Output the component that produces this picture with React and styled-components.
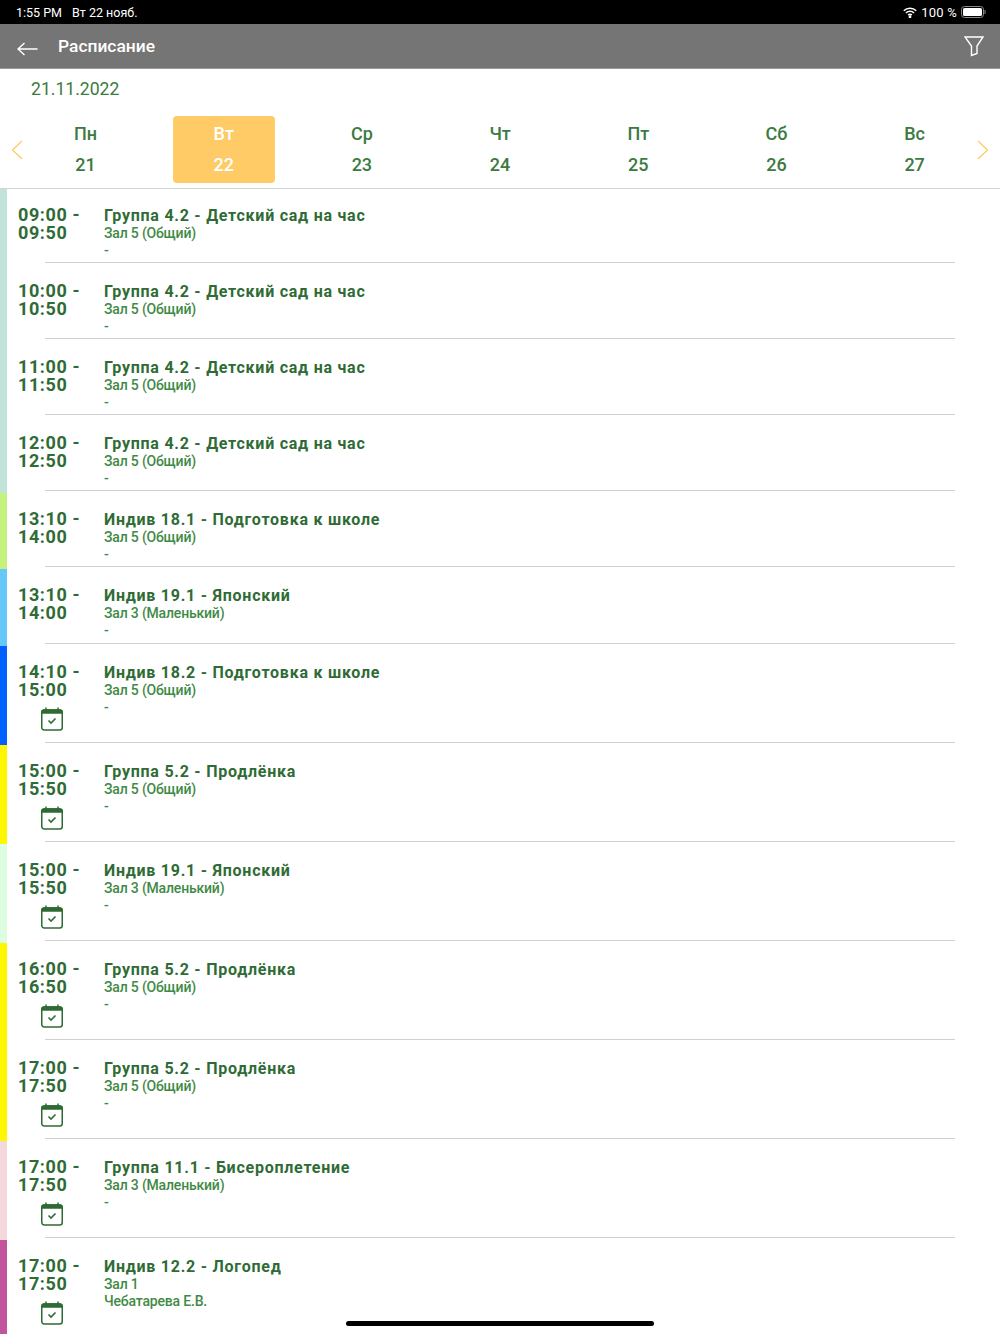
import React from "react";
import styled, { createGlobalStyle } from "styled-components";

const GlobalStyle = createGlobalStyle`
  html, body {
    margin: 0;
    padding: 0;
    background: #fff;
    font-family: Roboto, "Liberation Sans", sans-serif;
  }
`;

const Page = styled.div`
  position: relative;
  width: 1000px;
  height: 1334px;
  overflow: hidden;
  background: #fff;
`;

const StatusBar = styled.div`
  height: 24px;
  background: #000;
  color: #fff;
  font-size: 12.5px;
  display: flex;
  align-items: center;
  padding: 0 14px 0 16px;
`;

const StatusDate = styled.span`
  margin-left: 10px;
`;

const StatusRight = styled.div`
  margin-left: auto;
  display: flex;
  align-items: center;
  gap: 4px;
  font-size: 13px;
  letter-spacing: 0.2px;
`;

const Toolbar = styled.div`
  height: 44px;
  background: #757575;
  border-bottom: 1px solid #9a9a9a;
  display: flex;
  align-items: center;
  padding: 0 16px 0 17px;
  color: #fff;
`;

const BackIcon = styled.svg`
  margin-top: 5px;
`;

const ToolbarTitle = styled.div`
  margin-left: 20px;
  font-size: 17.4px;
  font-weight: 500;
  margin-top: -1px;
`;

const ToolbarFilter = styled.div`
  margin-left: auto;
  display: flex;
`;

const DateLabel = styled.div`
  color: #3c7a40;
  font-size: 17.6px;
  line-height: 20px;
  padding: 10px 0 0 31px;
  height: 37px;
  box-sizing: border-box;
`;

const WeekRow = styled.div`
  display: flex;
  align-items: center;
  height: 83px;
  padding: 5px 0 0 11px;
  border-bottom: 1px solid #d4d4d4;
  box-sizing: border-box;
`;

const Days = styled.div`
  flex: none;
  display: grid;
  grid-template-columns: repeat(7, 102px);
  column-gap: 36.2px;
  margin: 0 11.5px;
`;

const Day = styled.div`
  height: 67px;
  border-radius: 4px;
  display: flex;
  flex-direction: column;
  align-items: center;
  justify-content: center;
  gap: 11px;
  font-size: 18px;
  line-height: 20px;
  font-weight: 500;
  color: ${(p) => (p.$active ? "#fff" : "#3c7a40")};
  background: ${(p) => (p.$active ? "#fecb66" : "transparent")};
`;

const Chevron = styled.svg`
  flex: none;
  display: block;
`;

const Row = styled.div`
  display: flex;
  height: ${(p) => p.$height}px;
`;

const ColorBar = styled.div`
  width: 7px;
  flex: none;
  background: ${(p) => p.$color};
`;

const RowInner = styled.div`
  flex: none;
  width: 948px;
  margin-right: 45px;
  position: relative;
  display: flex;
  box-sizing: border-box;
  padding-top: 17px;
`;

const Divider = styled.div`
  position: absolute;
  left: 38px;
  right: 0;
  bottom: 2px;
  height: 1px;
  background: #d0d0d0;
`;

const TimeCol = styled.div`
  width: 97px;
  flex: none;
  padding-left: 11px;
  box-sizing: border-box;
`;

const Time = styled.div`
  color: #2f6b35;
  font-size: 18px;
  line-height: 18px;
  font-weight: 700;
  letter-spacing: 0.6px;
  white-space: pre-line;
`;

const CalendarWrap = styled.div`
  margin: 8px 0 0 22px;
  width: 24px;
  height: 24px;
`;

const Info = styled.div`
  flex: 1;
  padding-top: 1px;
`;

const Title = styled.div`
  color: #2f6b35;
  font-size: 16px;
  line-height: 18px;
  font-weight: 700;
  letter-spacing: 0.75px;
`;

const Sub = styled.div`
  color: #3f8a45;
  font-size: 14px;
  line-height: 17px;
  font-weight: 500;
  letter-spacing: -0.18px;
`;

const HomeBar = styled.div`
  position: absolute;
  left: 346px;
  bottom: 8px;
  width: 308px;
  height: 5px;
  border-radius: 3px;
  background: #000;
`;

const CalendarIcon = () => (
  <svg width="24" height="24" viewBox="0 0 24 24" fill="none" stroke="#2f6b35">
    <rect x="1.75" y="3" width="20.5" height="20" rx="2.5" strokeWidth="1.5" />
    <path d="M1.75 5.5a2.5 2.5 0 0 1 2.5-2.5h15.5a2.5 2.5 0 0 1 2.5 2.5V6H1.75z" fill="#2f6b35" strokeWidth="1.5" />
    <path d="M6 .5v2.5M18 .5v2.5" strokeWidth="1.5" />
    <path d="M8.5 13.5l2.5 2.5 4.5-4.5" strokeWidth="1.6" />
  </svg>
);

const days = [
  ["Пн", 21],
  ["Вт", 22, true],
  ["Ср", 23],
  ["Чт", 24],
  ["Пт", 25],
  ["Сб", 26],
  ["Вс", 27],
];

const teal = "#c0e4d9";
const yellow = "#fff700";
const hall5 = "Зал 5 (Общий)";
const hall3 = "Зал 3 (Маленький)";
const kids = "Группа 4.2 - Детский сад на час";
const prod = "Группа 5.2 - Продлёнка";

const lessons = [
  { color: teal, height: 76, from: "09:00", to: "09:50", title: kids, hall: hall5 },
  { color: teal, height: 76, from: "10:00", to: "10:50", title: kids, hall: hall5 },
  { color: teal, height: 76, from: "11:00", to: "11:50", title: kids, hall: hall5 },
  { color: teal, height: 76, from: "12:00", to: "12:50", title: kids, hall: hall5 },
  { color: "#c5f27c", height: 76, from: "13:10", to: "14:00", title: "Индив 18.1 - Подготовка к школе", hall: hall5 },
  { color: "#66c7f9", height: 77, from: "13:10", to: "14:00", title: "Индив 19.1 - Японский", hall: hall3 },
  { color: "#0061fe", height: 99, from: "14:10", to: "15:00", title: "Индив 18.2 - Подготовка к школе", hall: hall5, done: true },
  { color: yellow, height: 99, from: "15:00", to: "15:50", title: prod, hall: hall5, done: true },
  { color: "#dcfde2", height: 99, from: "15:00", to: "15:50", title: "Индив 19.1 - Японский", hall: hall3, done: true },
  { color: yellow, height: 99, from: "16:00", to: "16:50", title: prod, hall: hall5, done: true },
  { color: yellow, height: 99, from: "17:00", to: "17:50", title: prod, hall: hall5, done: true },
  { color: "#f3d9dc", height: 99, from: "17:00", to: "17:50", title: "Группа 11.1 - Бисероплетение", hall: hall3, done: true },
  { color: "#c1549d", height: 99, from: "17:00", to: "17:50", title: "Индив 12.2 - Логопед", hall: "Зал 1", teacher: "Чебатарева Е.В.", done: true },
];

export default function App() {
  return (
    <Page>
      <GlobalStyle />
      <StatusBar>
        <span>1:55 PM</span>
        <StatusDate>Вт 22 нояб.</StatusDate>
        <StatusRight>
          <svg width="14" height="11" viewBox="0 0 14 11" fill="none" stroke="#fff" strokeWidth="1.6">
            <path d="M.8 3.8a8.8 8.8 0 0 1 12.4 0" />
            <path d="M3 6a5.6 5.6 0 0 1 8 0" />
            <path d="M5.2 8.1a2.5 2.5 0 0 1 3.6 0" />
            <circle cx="7" cy="9.8" r="0.6" fill="#fff" />
          </svg>
          <span>100 %</span>
          <svg width="25" height="12" viewBox="0 0 25 12" fill="none">
            <rect x="0.5" y="0.5" width="22" height="11" rx="3" stroke="#8a8a8a" />
            <rect x="2" y="2" width="19" height="8" rx="1.6" fill="#fff" />
            <path d="M24 4v4" stroke="#8a8a8a" strokeWidth="1" />
          </svg>
        </StatusRight>
      </StatusBar>
      <Toolbar>
        <BackIcon width="21" height="14" viewBox="0 0 21 14" fill="none" stroke="#fff" strokeWidth="1.4">
          <path d="M20.5 7H1M7.5 1 1 7l6.5 6" />
        </BackIcon>
        <ToolbarTitle>Расписание</ToolbarTitle>
        <ToolbarFilter>
          <svg width="20" height="21" viewBox="0 0 20 21" fill="none" stroke="#fff" strokeWidth="1.4">
            <path d="M1 1h18l-6 9v7.5l-5.5 2V10z" />
          </svg>
        </ToolbarFilter>
      </Toolbar>
      <DateLabel>21.11.2022</DateLabel>
      <WeekRow>
        <Chevron width="12" height="20" viewBox="0 0 12 20" fill="none" stroke="#fecb66" strokeWidth="1.3">
          <path d="M11 1 1.5 10 11 19" />
        </Chevron>
        <Days>
          {days.map(([name, num, active]) => (
            <Day key={num} $active={active}>
              <span>{name}</span>
              <span>{num}</span>
            </Day>
          ))}
        </Days>
        <Chevron width="12" height="20" viewBox="0 0 12 20" fill="none" stroke="#fecb66" strokeWidth="1.3">
          <path d="M1 1l9.5 9L1 19" />
        </Chevron>
      </WeekRow>
      {lessons.map((l, i) => (
        <Row key={i} $height={l.height}>
          <ColorBar $color={l.color} />
          <RowInner>
            <TimeCol>
              <Time>{`${l.from} -\n${l.to}`}</Time>
              {l.done && (
                <CalendarWrap>
                  <CalendarIcon />
                </CalendarWrap>
              )}
            </TimeCol>
            <Info>
              <Title>{l.title}</Title>
              <Sub>{l.hall}</Sub>
              <Sub>{l.teacher || "-"}</Sub>
            </Info>
            <Divider />
          </RowInner>
        </Row>
      ))}
      <HomeBar />
    </Page>
  );
}
